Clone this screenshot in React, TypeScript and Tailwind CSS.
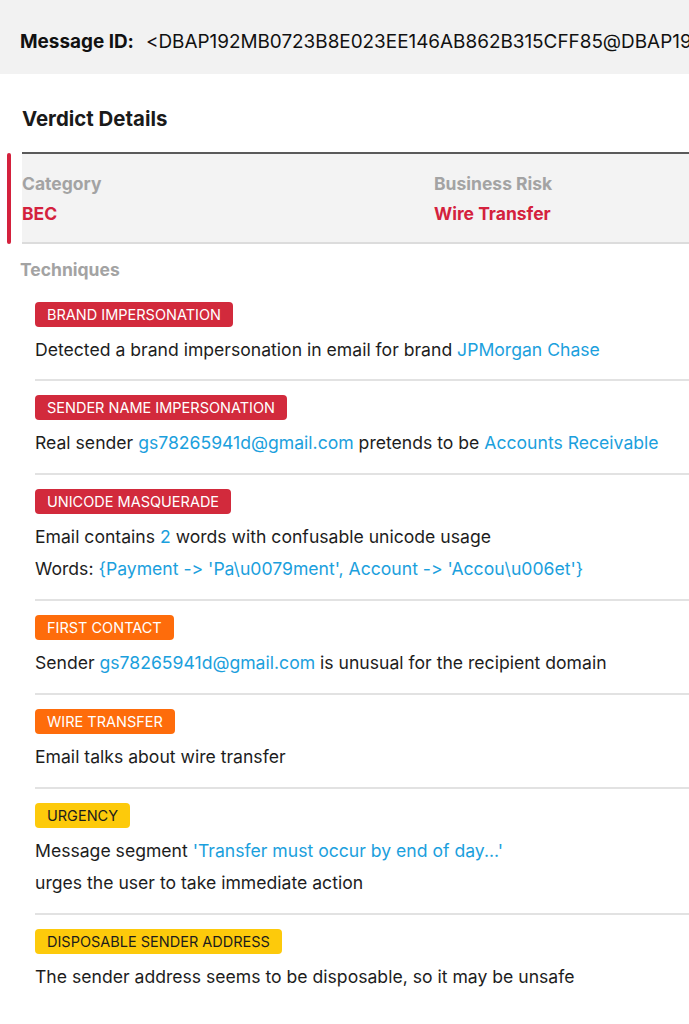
import React from 'react';

type Tone = 'red' | 'orange' | 'yellow';

const badgeClass: Record<Tone, string> = {
  red: 'bg-[#d22a3c] text-white',
  orange: 'bg-[#fe6c0b] text-white',
  yellow: 'bg-[#fdca0b] text-[#1c1c1c]',
};

const Link = ({ children }: { children: React.ReactNode }) => (
  <span className="text-[#1ba0dd]">{children}</span>
);

const Badge = ({ label, tone }: { label: string; tone: Tone }) => (
  <span
    className={`inline-flex h-[25px] items-center rounded-[4px] px-[12px] text-[14.5px] uppercase ${badgeClass[tone]}`}
  >
    {label}
  </span>
);

const Technique = ({
  label,
  tone,
  lines,
  first,
  last,
}: {
  label: string;
  tone: Tone;
  lines: React.ReactNode[];
  first?: boolean;
  last?: boolean;
}) => (
  <div
    className={`ml-[35px] ${last ? '' : 'border-b-2 border-[#e2e2e2]'} ${first ? 'pt-[19px] pb-[13px]' : 'pt-[14px] pb-[14px]'}`}
  >
    <div className="flex">
      <Badge label={label} tone={tone} />
    </div>
    <div className="mt-[7px]">
      {lines.map((line, i) => (
        <p key={i} className="text-[17.6px] leading-[32px] text-[#1d1d1d]">
          {line}
        </p>
      ))}
    </div>
  </div>
);

export default function App() {
  return (
    <div className="min-h-screen w-[689px] overflow-hidden bg-white font-['Inter','Liberation_Sans',sans-serif] [font-feature-settings:'calt'_0,'liga'_0]">
      {/* message id header */}
      <div className="flex h-[74px] items-center overflow-hidden whitespace-nowrap bg-[#f2f2f2] pl-[20px] pt-[10px] text-[18.9px] text-[#111]">
        <span className="font-bold">Message ID:</span>
        <span className="ml-[12px]">&lt;DBAP192MB0723B8E023EE146AB862B315CFF85@DBAP192MB0723.EURP192.PROD.OUTLOOK.COM&gt;</span>
      </div>

      <h2 className="pl-[22px] pt-[31px] text-[20.4px] font-bold leading-[28px] text-[#1a1a1a]">Verdict Details</h2>

      <div className="relative mt-[19px]">
        <div className="absolute bottom-0 left-[7px] top-[1px] w-[4px] rounded-full bg-[#d4213d]" />
        <div className="ml-[22px] border-t-2 border-b-2 border-t-[#5a5a5a] border-b-[#dcdcdc] bg-[#f3f3f3] pb-[16px] pt-[17px]">
          <div className="grid grid-cols-[412px_1fr] text-[17.5px] font-bold">
            <div>
              <div className="leading-[26px] text-[#a3a3a3]">Category</div>
              <div className="mt-[5px] leading-[24px] text-[#d4213d]">BEC</div>
            </div>
            <div>
              <div className="leading-[26px] text-[#a3a3a3]">Business Risk</div>
              <div className="mt-[5px] leading-[24px] text-[#d4213d]">Wire Transfer</div>
            </div>
          </div>
        </div>
      </div>

      <div className="pl-[20px] pt-[13px] text-[17.5px] font-bold leading-[26px] text-[#a3a3a3]">Techniques</div>

      <Technique
        first
        label="Brand Impersonation"
        tone="red"
        lines={[<>Detected a brand impersonation in email for brand <Link>JPMorgan Chase</Link></>]}
      />
      <Technique
        label="Sender Name Impersonation"
        tone="red"
        lines={[
          <>
            Real sender <Link>gs78265941d@gmail.com</Link> pretends to be <Link>Accounts Receivable</Link>
          </>,
        ]}
      />
      <Technique
        label="Unicode Masquerade"
        tone="red"
        lines={[
          <>
            Email contains <Link>2</Link> words with confusable unicode usage
          </>,
          <>
            Words: <Link>{"{Payment -> 'Pa\\u0079ment', Account -> 'Accou\\u006et'}"}</Link>
          </>,
        ]}
      />
      <Technique
        label="First Contact"
        tone="orange"
        lines={[
          <>
            Sender <Link>gs78265941d@gmail.com</Link> is unusual for the recipient domain
          </>,
        ]}
      />
      <Technique label="Wire Transfer" tone="orange" lines={[<>Email talks about wire transfer</>]} />
      <Technique
        label="Urgency"
        tone="yellow"
        lines={[
          <>
            Message segment <Link>'Transfer must occur by end of day...'</Link>
          </>,
          <>urges the user to take immediate action</>,
        ]}
      />
      <Technique
        last
        label="Disposable Sender Address"
        tone="yellow"
        lines={[<>The sender address seems to be disposable, so it may be unsafe</>]}
      />
    </div>
  );
}
